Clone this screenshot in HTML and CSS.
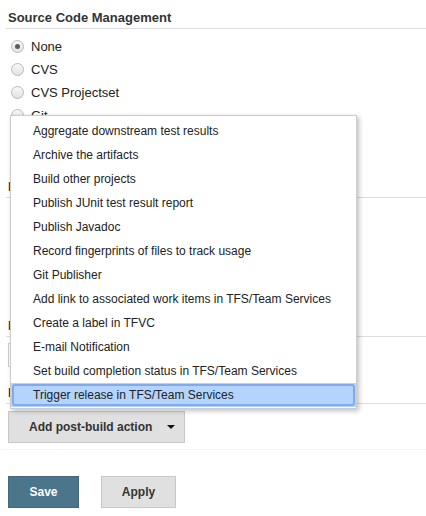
FILE: index.html
```html
<!DOCTYPE html>
<html>
<head>
<meta charset="utf-8">
<link rel="stylesheet" href="styles.css">
</head>
<body>
<div class="page">
  <div class="section">
    <div class="section-header">Source Code Management</div>
    <div class="radios">
      <label class="radio-row"><span class="radio checked"></span><span>None</span></label>
      <label class="radio-row"><span class="radio"></span><span>CVS</span></label>
      <label class="radio-row"><span class="radio"></span><span>CVS Projectset</span></label>
      <label class="radio-row"><span class="radio"></span><span>Git</span></label>
    </div>
  </div>

  <div class="section s2">
    <div class="section-header">B</div>
    <div class="hidden-body b2"></div>
  </div>

  <div class="section s3">
    <div class="section-header">B</div>
    <div class="hidden-body b3"><div class="field"></div></div>
  </div>

  <div class="section s4">
    <div class="section-header">P</div>
    <button class="btn btn-menu"><span>Add post-build action</span><span class="caret"></span></button>
    <div class="dotted"></div>
  </div>

  <div class="actions">
    <button class="btn btn-primary">Save</button>
    <button class="btn btn-apply">Apply</button>
  </div>
</div>

<ul class="menu">
  <li>Aggregate downstream test results</li>
  <li>Archive the artifacts</li>
  <li>Build other projects</li>
  <li>Publish JUnit test result report</li>
  <li>Publish Javadoc</li>
  <li>Record fingerprints of files to track usage</li>
  <li>Git Publisher</li>
  <li>Add link to associated work items in TFS/Team Services</li>
  <li>Create a label in TFVC</li>
  <li>E-mail Notification</li>
  <li>Set build completion status in TFS/Team Services</li>
  <li class="selected">Trigger release in TFS/Team Services</li>
</ul>
</body>
</html>
```

FILE: styles.css
```css
html, body {
  margin: 0;
  padding: 0;
  background: #fff;
}
body {
  font-family: "Liberation Sans", Arial, sans-serif;
  font-size: 13px;
  color: #333;
}
.page {
  width: 426px;
}
.section-header {
  margin-left: 6px;
  padding: 10px 0 2px 2px;
  line-height: 16px;
  font-weight: bold;
  color: #333;
  border-bottom: 1px solid #ddd;
}
.radios {
  margin-top: 6px;
  display: flex;
  flex-direction: column;
}
.radio-row {
  height: 23px;
  display: flex;
  align-items: center;
  padding-left: 11px;
  gap: 7px;
  color: #222;
}
.radio {
  width: 11px;
  height: 11px;
  border-radius: 50%;
  border: 1px solid #b9b9b9;
  background: linear-gradient(#f8f8f8, #e2e2e2);
  display: flex;
  align-items: center;
  justify-content: center;
}
.radio.checked::after {
  content: "";
  width: 5px;
  height: 5px;
  border-radius: 50%;
  background: #5a5a5a;
}
.s2 { margin-top: 42px; }
.b2 { height: 110px; }
.b3 {
  height: 38px;
  padding-top: 6px;
  box-sizing: border-box;
}
.field {
  margin-left: 8px;
  width: 300px;
  height: 24px;
  border: 1px solid #ccc;
  box-sizing: border-box;
}
.s4 .btn-menu { margin-top: 7px; }
.btn {
  font-family: "Liberation Sans", Arial, sans-serif;
  font-size: 12px;
  font-weight: bold;
  height: 32px;
  box-sizing: border-box;
  border: 1px solid #c8c8c8;
  background: #e0e0e0;
  color: #333;
  padding: 0;
  white-space: nowrap;
  cursor: pointer;
}
.btn-menu {
  display: flex;
  align-items: center;
  justify-content: space-between;
  margin-left: 8px;
  width: 177px;
  padding: 0 9px 0 20px;
}
.caret {
  width: 0;
  height: 0;
  border-left: 4px solid transparent;
  border-right: 4px solid transparent;
  border-top: 4px solid #111;
}
.dotted {
  margin-top: 6px;
  border-bottom: 1px dotted #f0f0f0;
}
.actions {
  margin-top: 26px;
  margin-left: 8px;
  display: flex;
  gap: 22px;
}
.btn-primary {
  width: 71px;
  background: #4b758b;
  border-color: #44697d;
  color: #fff;
}
.btn-apply {
  width: 75px;
}
.menu {
  position: absolute;
  left: 10px;
  top: 115px;
  width: 347px;
  box-sizing: border-box;
  margin: 0;
  padding: 3px 0 1px;
  list-style: none;
  background: #fff;
  border: 1px solid #cdcdcd;
  box-shadow: 2px 2px 5px rgba(0, 0, 0, 0.25);
  font-size: 12px;
}
.menu li {
  height: 24px;
  line-height: 24px;
  padding-left: 22px;
  color: #222;
  white-space: nowrap;
  position: relative;
}
.menu li.selected {
  background: #b4d4fd;
}
.menu li.selected::after {
  content: "";
  position: absolute;
  left: 1px;
  right: 1px;
  top: 1px;
  bottom: 1px;
  border: 2px solid #80a9f2;
  border-radius: 3px;
}
```
